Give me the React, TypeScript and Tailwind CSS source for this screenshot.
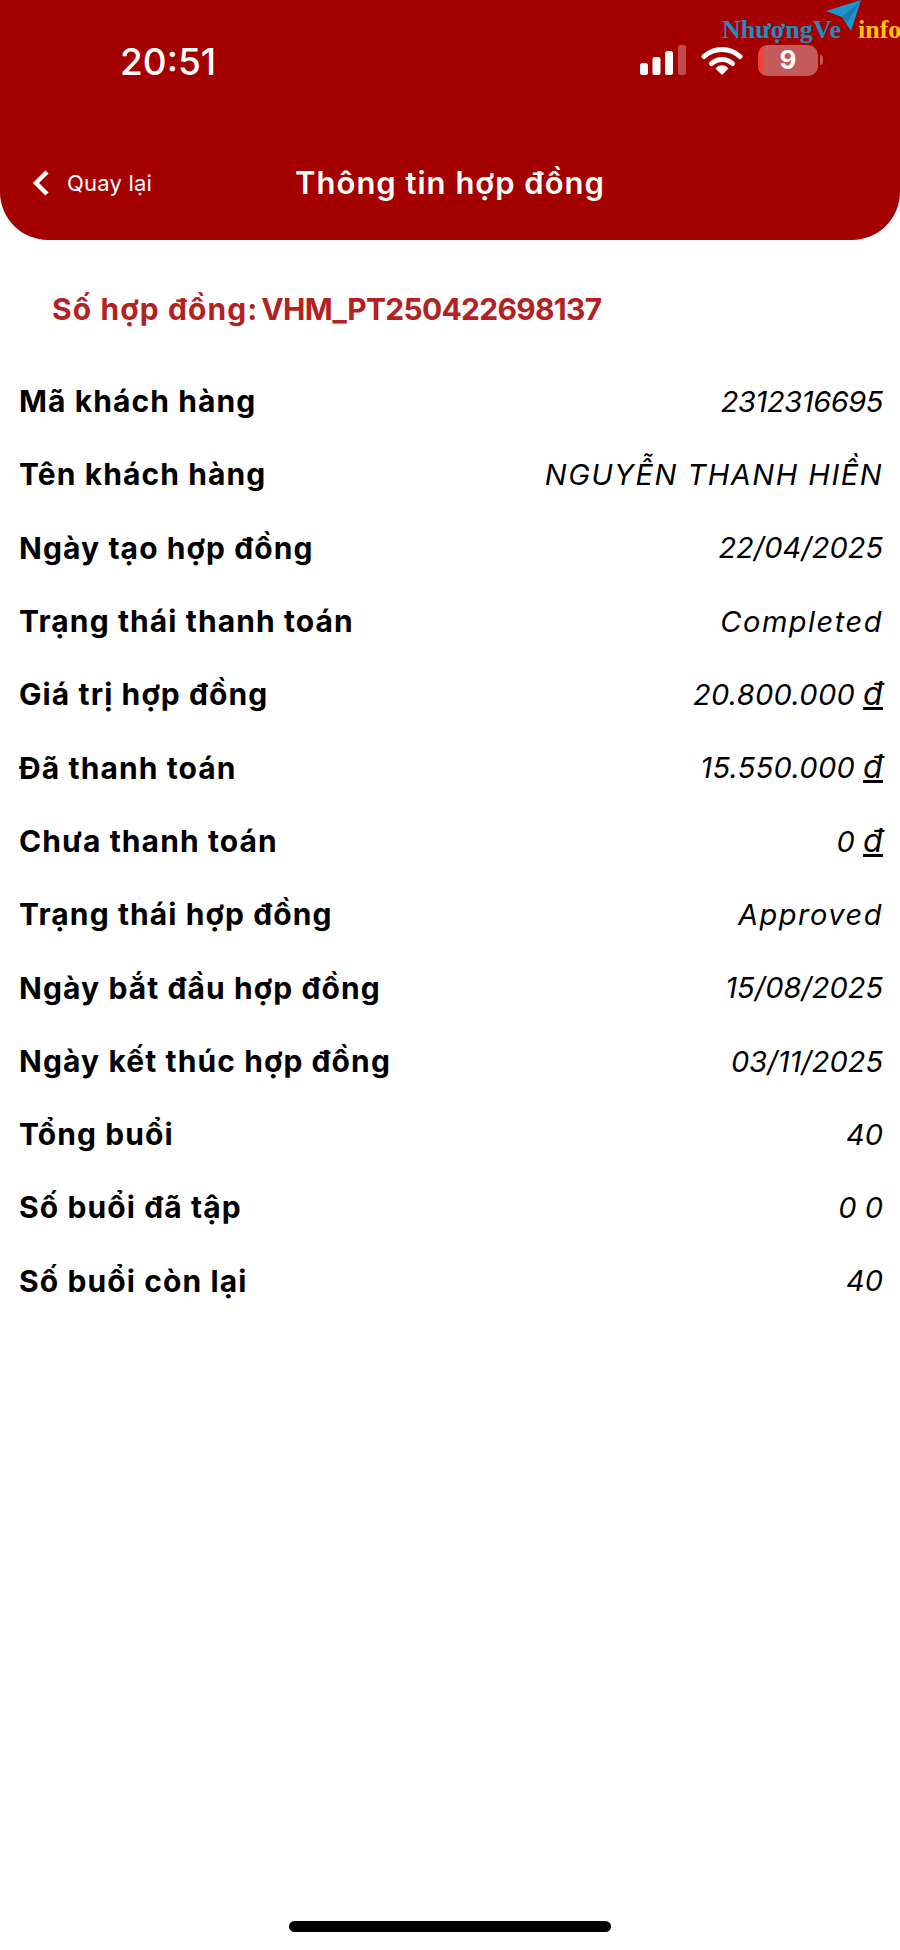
import React from 'react';

const rows = [
    { label: 'Mã khách hàng', value: '2312316695', narrow: true },
    { label: 'Tên khách hàng', value: 'NGUYỄN THANH HIỀN', wide: true },
    { label: 'Ngày tạo hợp đồng', value: '22/04/2025' },
    { label: 'Trạng thái thanh toán', value: 'Completed', wide: true },
    { label: 'Giá trị hợp đồng', value: '20.800.000', money: true },
    { label: 'Đã thanh toán', value: '15.550.000', money: true },
    { label: 'Chưa thanh toán', value: '0', money: true },
    { label: 'Trạng thái hợp đồng', value: 'Approved', wide: true },
    { label: 'Ngày bắt đầu hợp đồng', value: '15/08/2025' },
    { label: 'Ngày kết thúc hợp đồng', value: '03/11/2025' },
    { label: 'Tổng buổi', value: '40' },
    { label: 'Số buổi đã tập', value: '0 0' },
    { label: 'Số buổi còn lại', value: '40' },
];

const valueClass = (row: { wide?: boolean; narrow?: boolean; money?: boolean }) => {
    if (row.wide) return 'italic tracking-[1.5px]';
    if (row.narrow) return 'italic tracking-[-0.4px]';
    if (row.money) return 'italic tracking-[0.3px]';
    return 'italic';
};

const StatusIcons = () => (
    <div className="flex items-center -mt-[2px]">
        <svg width="46" height="32" viewBox="0 0 46 32" className="mr-[15px]">
            <rect x="0" y="19" width="8" height="12" rx="2.5" fill="#fff" />
            <rect x="12.5" y="13" width="8" height="18" rx="2.5" fill="#fff" />
            <rect x="25" y="7" width="8" height="24" rx="2.5" fill="#fff" />
            <rect x="38" y="1" width="8" height="30" rx="2.5" fill="#fff" fillOpacity="0.3" />
        </svg>
        <svg width="42" height="30" viewBox="0 0 42 30" className="mr-[15px]">
            <path d="M3 11.5C13 2 29 2 39 11.5" fill="none" stroke="#fff" strokeWidth="5" strokeLinecap="round" />
            <path d="M10.5 18.5C16.5 13 25.5 13 31.5 18.5" fill="none" stroke="#fff" strokeWidth="5" strokeLinecap="round" />
            <path d="M14.5 23.5C18.5 19.2 23.5 19.2 27.5 23.5L21 30Z" fill="#fff" />
        </svg>
        <div className="flex items-center">
            <div className="w-[60px] h-[31px] rounded-[10px] overflow-hidden bg-[#c45a5a] flex relative">
                <div className="w-[6px] bg-[#f0413c]" />
                <span className="absolute inset-0 flex items-center justify-center text-white text-[26px] font-bold font-['Inter',sans-serif] leading-none">9</span>
            </div>
            <div className="w-[3px] h-[10px] ml-[2px] rounded-r-[3px] bg-[#c45a5a]" />
        </div>
    </div>
);

const Watermark = () => (
    <div className="absolute top-0 right-0 w-[180px] h-[46px] font-['Liberation_Serif',serif] font-bold text-[26px] leading-none">
        <span className="absolute left-[2px] top-[17px] text-[#1d8dc4]">Nhượng</span>
        <span className="absolute left-[93px] top-[17px] text-[#1d8dc4]">Ve</span>
        <span className="absolute left-[138px] top-[17px] text-[#ffc20e]">info</span>
        <svg width="40" height="34" viewBox="0 0 40 34" className="absolute left-[105px] top-0">
            <path d="M1 11L36 0L26 31L17 17Z" fill="#1c95cf" />
            <path d="M17 17L36 0L22 23Z" fill="#157cae" />
        </svg>
    </div>
);

const App = () => {
    return (
        <div className="w-[900px] h-[1950px] bg-white flex flex-col relative font-['Inter',sans-serif]">
            <div className="bg-[#a50000] h-[240px] rounded-b-[48px] text-white flex flex-col">
                <div className="flex items-center justify-between h-[122px] pl-[120px] pr-[77px]">
                    <span className="text-[37px] font-medium leading-none">20:51</span>
                    <StatusIcons />
                </div>
                <div className="relative flex items-center justify-center h-[60px] mt-[31px]">
                    <div className="absolute left-[32px] flex items-center gap-[17px]">
                        <svg width="18" height="26" viewBox="0 0 18 26">
                            <path d="M15 2L4 13L15 24" fill="none" stroke="#fff" strokeWidth="4.5" />
                        </svg>
                        <span className="text-[22px] tracking-[0.2px]">Quay lại</span>
                    </div>
                    <h1 className="text-[31px] font-semibold tracking-[1px]">Thông tin hợp đồng</h1>
                </div>
            </div>

            <div className="pl-[52px] pt-[47px] h-[125px] text-[30px] font-bold text-[#b22222] flex gap-[3px] leading-[44px]">
                <span className="tracking-[1.1px]">Số hợp đồng:</span>
                <span className="tracking-[-0.7px]">VHM_PT250422698137</span>
            </div>

            <div className="pl-[19px] pr-[17px] flex flex-col">
                {rows.map((row) => (
                    <div key={row.label} className="h-[73.3px] flex items-center justify-between text-[29px] text-black">
                        <span className="font-bold text-[30px] tracking-[1.1px]">{row.label}</span>
                        <span className={valueClass(row)}>
                            {row.value}
                            {row.money && <span className="underline ml-[8px] text-[32px] leading-none">đ</span>}
                        </span>
                    </div>
                ))}
            </div>

            <div className="mt-auto mb-[18px] mx-auto w-[322px] h-[11px] rounded-full bg-black" />

            <Watermark />
        </div>
    );
};

export default App;
